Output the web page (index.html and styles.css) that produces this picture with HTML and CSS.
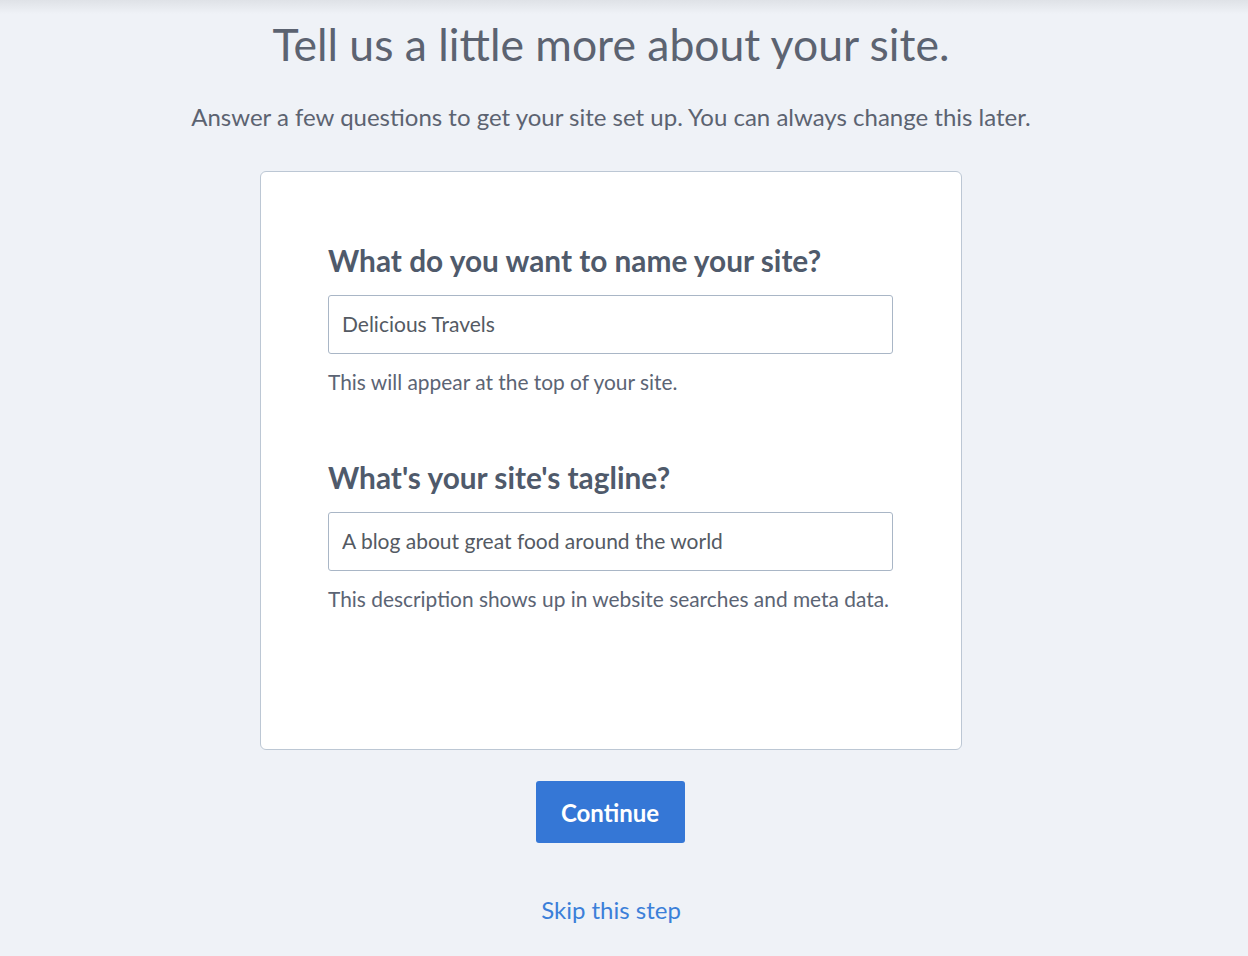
FILE: index.html
```html
<!DOCTYPE html>
<html lang="en">
<head>
<meta charset="UTF-8">
<meta name="viewport" content="width=device-width, initial-scale=1.0">
<title>Site Setup</title>
<link rel="stylesheet" href="styles.css">
</head>
<body>

<div class="topShade"></div>
<div class="page">
    <h1 class="title">Tell us a little more about your site.</h1>
    <p class="subtitle">Answer a few questions to get your site set up. You can always change this later.</p>

    <div class="card">
        <div class="field">
            <label class="question" for="siteName">What do you want to name your site?</label>
            <input type="text" id="siteName" value="Delicious Travels">
            <div class="hint">This will appear at the top of your site.</div>
        </div>
        <div class="field">
            <label class="question" for="tagline">What's your site's tagline?</label>
            <input type="text" id="tagline" value="A blog about great food around the world">
            <div class="hint">This description shows up in website searches and meta data.</div>
        </div>
    </div>

    <button class="continue">Continue</button>
    <a class="skip" href="#">Skip this step</a>
</div>

</body>
</html>
```

FILE: styles.css
```css
body {
    margin: 0;
    background-color: #eff2f7;
    font-family: Lato, "Open Sans", sans-serif;
    color: #5a6271;
}
.topShade {
    height: 14px;
    background: linear-gradient(#dfe2e7, #eff2f7);
    margin-bottom: -14px;
}
.page {
    display: flex;
    flex-direction: column;
    align-items: center;
    padding-right: 26px; /* content sits a bit left of centre */
}
.title {
    font-size: 44.5px;
    font-weight: 400;
    margin: 19px 0 0 0;
    line-height: 50px;
    color: #5c6371;
}
.subtitle {
    font-size: 24px;
    margin: 34px 0 0 0;
    line-height: 28px;
    color: #5c6371;
}
.card {
    width: 702px;
    height: 579px;
    box-sizing: border-box;
    margin-top: 40px;
    background: white;
    border: 1px solid #bcc7d4;
    border-radius: 6px;
    display: flex;
    flex-direction: column;
    padding: 72px 0 0 67px;
}
.field {
    display: flex;
    flex-direction: column;
    width: 565px;
    margin-bottom: 67px;
}
.question {
    font-size: 29.8px;
    font-weight: 700;
    color: #4f5a6b;
    line-height: 34px;
}
input {
    margin-top: 17px;
    height: 59px;
    box-sizing: border-box;
    border: 1px solid #a9b6c6;
    border-radius: 3px;
    padding: 0 13px 2px 13px;
    font-family: Lato, "Open Sans", sans-serif;
    font-size: 21px;
    color: #545a63;
    background: white;
}
.hint {
    margin-top: 16px;
    font-size: 20.9px;
    line-height: 24px;
    color: #5b6474;
}
.continue {
    margin-top: 31px;
    margin-right: 2px;
    width: 149px;
    height: 62px;
    border: none;
    border-radius: 3px;
    background-color: #3577d6;
    color: white;
    font-family: Lato, "Open Sans", sans-serif;
    font-size: 24px;
    font-weight: 700;
    cursor: pointer;
}
.skip {
    margin-top: 53px;
    font-size: 24px;
    line-height: 28px;
    color: #3b7fd9;
    text-decoration: none;
}
```
